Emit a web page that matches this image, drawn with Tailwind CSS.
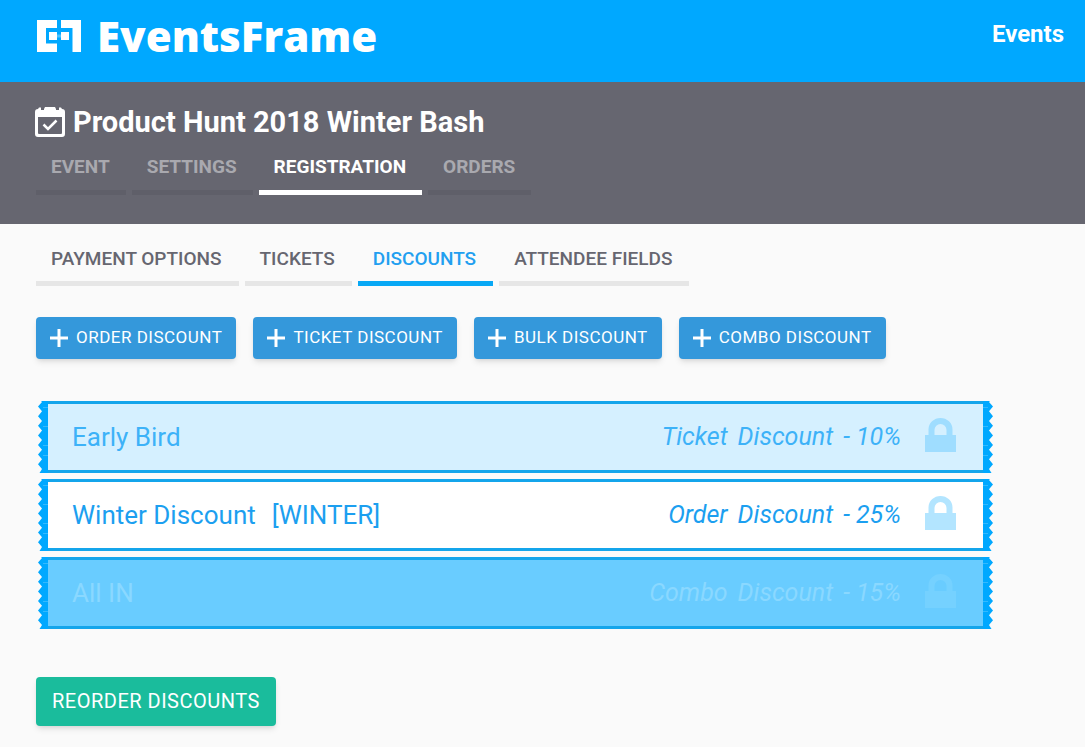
<!DOCTYPE html>
<html lang="en">
  <head>
    <meta charset="UTF-8" />
    <meta name="viewport" content="width=device-width, initial-scale=1.0" />
    <title>EventsFrame - Discounts</title>
    <script src="https://cdn.jsdelivr.net/npm/@tailwindcss/browser@4"></script>
  </head>
  <body class="min-h-screen bg-[#fafafa] font-['Roboto',sans-serif]">
    <!-- Shapes shared by the buttons and the discount rows -->
    <svg class="hidden">
      <symbol id="plus" viewBox="0 0 18 18">
        <path d="M7.5 0h3v7.5H18v3h-7.500V18h-3v-7.500H0v-3h7.500z" fill="currentColor" />
      </symbol>
      <symbol id="lock" viewBox="0 0 31 38">
        <path d="M0 17h3.500v-5.500a12 11.500 0 0 1 24 0V17H31v17H0zM9.500 17h12v-5a6 6 0 0 0-12 0z" fill="currentColor" fill-rule="evenodd" />
      </symbol>
      <symbol id="edge" viewBox="0 0 10 72">
        <path d="M10 0H3L4 1L0 5.500L4 10.300L0 15.200L4 19.900L0 24.800L4 29.500L0 34.400L4 39.100L0 44L4 48.700L0 53.600L4 58.300L0 63.200L4 67.900L1.500 72H10z" fill="#00a8ff" />
        <path d="M5 6.500h5M5 25.500h5M5 44.500h5M5 54.500h5" stroke="#33b9ff" stroke-width="1" />
      </symbol>
    </svg>

    <header class="flex h-[82px] items-start justify-between bg-[#00a8ff] pr-[21px] pl-[37px] text-white">
      <a href="#" class="flex items-center gap-4 pt-[7px]">
        <svg class="h-8 w-11" viewBox="0 0 44 32" fill="currentColor">
          <path d="M0 0h20v8H9v15.500h11V32H0z" />
          <path d="M24 0h20v32h-8.500V8H24z" />
          <path d="M12 12h8v8h-8zM24 12h8v8h-8z" />
          <path d="M20 14.500h4v3h-4z" opacity=".3" />
        </svg>
        <span class="font-['Open_Sans',sans-serif] text-[42px] leading-[58px] font-extrabold">EventsFrame</span>
      </a>
      <nav class="pt-[18px]">
        <a href="#" class="text-2xl font-bold">Events</a>
      </nav>
    </header>

    <!-- Event title and main tabs -->
    <section class="h-[142px] bg-[#666670] px-[35px] pt-[21px] text-white">
      <h1 class="flex h-10 items-center gap-2 text-[29px] font-bold">
        <svg class="h-8 w-[30px]" viewBox="0 0 30 32">
          <path d="M3 2L4 .5H6V3H9V2L10 0H20L21 2V3H24V.5H26L27 2A3 3 0 0 1 30 5V27A3 3 0 0 1 27 30H3A3 3 0 0 1 0 27V5A3 3 0 0 1 3 2zM3 10V26A1 1 0 0 0 4 27H26A1 1 0 0 0 27 26V10z" fill="currentColor" fill-rule="evenodd" />
          <path d="M8.500 17.500l4.500 4.500 8.500-8.500" fill="none" stroke="currentColor" stroke-width="2.500" />
        </svg>
        Product Hunt 2018 Winter Bash
      </h1>
      <nav class="ml-px flex gap-1.5 pt-[9px] text-[19px] leading-[30px] font-bold text-[#a9a9af]">
        <a href="#" class="border-b-5 border-[#5f5f69] pr-4 pb-2 pl-[15px]">EVENT</a>
        <a href="#" class="border-b-5 border-[#5f5f69] pr-4 pb-2 pl-[15px]">SETTINGS</a>
        <a href="#" class="border-b-5 border-white pr-4 pb-2 pl-[15px] text-white">REGISTRATION</a>
        <a href="#" class="border-b-5 border-[#5f5f69] pr-4 pb-2 pl-[15px]">ORDERS</a>
      </nav>
    </section>

    <main class="px-9 pt-5">
      <nav class="flex gap-1.5 text-[19px] leading-[29px] font-medium text-[#666670]">
        <a href="#" class="border-b-5 border-[#e6e6e6] pr-[17px] pb-2 pl-[15px]">PAYMENT OPTIONS</a>
        <a href="#" class="border-b-5 border-[#e6e6e6] pr-[17px] pb-2 pl-[15px]">TICKETS</a>
        <a href="#" class="border-b-5 border-[#08a8f5] pr-[17px] pb-2 pl-[15px] text-[#229ff0]">DISCOUNTS</a>
        <a href="#" class="border-b-5 border-[#e6e6e6] pr-[17px] pb-2 pl-[15px]">ATTENDEE FIELDS</a>
      </nav>

      <div class="mt-[31px] flex gap-[17px] text-[17px] tracking-[0.5px] text-white">
        <button class="flex h-[42px] items-center gap-2 rounded bg-[#3498db] px-3.5 shadow-md"><svg class="size-[18px]"><use href="#plus" /></svg>ORDER DISCOUNT</button>
        <button class="flex h-[42px] items-center gap-2 rounded bg-[#3498db] px-3.5 shadow-md"><svg class="size-[18px]"><use href="#plus" /></svg>TICKET DISCOUNT</button>
        <button class="flex h-[42px] items-center gap-2 rounded bg-[#3498db] px-3.5 shadow-md"><svg class="size-[18px]"><use href="#plus" /></svg>BULK DISCOUNT</button>
        <button class="flex h-[42px] items-center gap-2 rounded bg-[#3498db] px-3.5 shadow-md"><svg class="size-[18px]"><use href="#plus" /></svg>COMBO DISCOUNT</button>
      </div>

      <!-- Discounts -->
      <ul class="mt-[42px] mr-14 ml-0.5 flex flex-col gap-1.5 text-[26px] text-[#1c9ff0]">
        <li class="flex h-[72px]">
          <svg class="h-[72px] w-2.5"><use href="#edge" /></svg>
          <div class="flex flex-1 items-center gap-6 border-y-3 border-[#14a5eb] bg-[#d5f0ff] pr-[27px] pl-6 text-[#3db2f8]">
            <span class="flex-1">Early Bird</span>
            <em class="flex gap-2.5 text-[25px]"><span>Ticket</span><span>Discount</span><span>- 10%</span></em>
            <svg class="h-[38px] w-[31px] text-[#9fddff]"><use href="#lock" /></svg>
          </div>
          <svg class="h-[72px] w-2.5 -scale-x-100"><use href="#edge" /></svg>
        </li>
        <li class="flex h-[72px]">
          <svg class="h-[72px] w-2.5"><use href="#edge" /></svg>
          <div class="flex flex-1 items-center gap-6 border-y-3 border-[#14a5eb] bg-white pr-[27px] pl-6">
            <span class="flex flex-1 gap-4"><span>Winter Discount</span><span>[WINTER]</span></span>
            <em class="flex gap-2.5 text-[25px]"><span>Order</span><span>Discount</span><span>- 25%</span></em>
            <svg class="h-[38px] w-[31px] text-[#b3e5ff]"><use href="#lock" /></svg>
          </div>
          <svg class="h-[72px] w-2.5 -scale-x-100"><use href="#edge" /></svg>
        </li>
        <li class="flex h-[72px]">
          <svg class="h-[72px] w-2.5"><use href="#edge" /></svg>
          <div class="flex flex-1 items-center gap-6 border-y-3 border-[#14a5eb] bg-[#69ccff] pr-[27px] pl-6 text-[#8ad8ff]">
            <span class="flex-1">All IN</span>
            <em class="flex gap-2.5 text-[25px]"><span>Combo</span><span>Discount</span><span>- 15%</span></em>
            <svg class="h-[38px] w-[31px] text-[#75d1ff]"><use href="#lock" /></svg>
          </div>
          <svg class="h-[72px] w-2.5 -scale-x-100"><use href="#edge" /></svg>
        </li>
      </ul>

      <button class="mt-12 h-[49px] rounded bg-[#1abc9c] px-4 pb-0.5 text-xl tracking-wide text-white shadow-md">REORDER DISCOUNTS</button>
    </main>
  </body>
</html>
